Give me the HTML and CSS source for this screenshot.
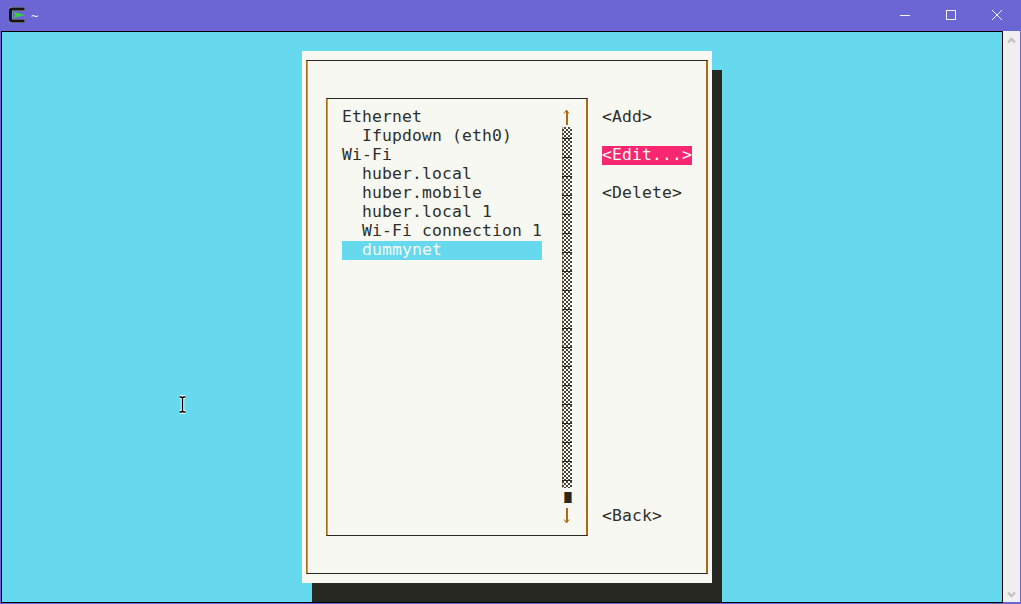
FILE: index.html
```html
<!DOCTYPE html>
<html lang="en">
<head>
<meta charset="utf-8">
<title>~</title>
<link rel="stylesheet" href="styles.css">
</head>
<body>
<div class="window">
  <header class="titlebar">
    <svg class="app-icon" width="17" height="17" viewBox="0 0 17 17">
      <path d="M15.500 2H3Q1.500 2 1.500 3.500V12.500Q1.500 14 3 14H15.500" fill="none" stroke="#a9a9b8" stroke-width="4"/>
      <path d="M15.500 2H3Q1.500 2 1.500 3.500V12.500Q1.500 14 3 14H15.500" fill="none" stroke="#151515" stroke-width="3"/>
      <path d="M4.500 5L15.500 8L4.500 11L6.500 8Z" fill="#2fd82f"/>
    </svg>
    <span class="title-text">~</span>
    <div class="controls">
      <svg class="ctl" width="12" height="12" viewBox="0 0 12 12"><path d="M1 6.500H11" stroke="#f4f4fb" fill="none"/></svg>
      <svg class="ctl" width="12" height="12" viewBox="0 0 12 12"><rect x="1.500" y="1.500" width="9" height="9" stroke="#f4f4fb" fill="none"/></svg>
      <svg class="ctl" width="12" height="12" viewBox="0 0 12 12"><path d="M1 1L11 11M11 1L1 11" stroke="#f4f4fb" fill="none"/></svg>
    </div>
  </header>
  <div class="body">
    <main class="terminal">
      <section class="dialog">
        <div class="frame">
          <div class="listbox">
            <ul class="entries">
              <li>Ethernet</li>
              <li class="sub">Ifupdown (eth0)</li>
              <li>Wi-Fi</li>
              <li class="sub">huber.local</li>
              <li class="sub">huber.mobile</li>
              <li class="sub">huber.local 1</li>
              <li class="sub">Wi-Fi connection 1</li>
              <li class="sub selected">dummynet</li>
            </ul>
            <div class="scroll">
              <svg class="arrow" width="10" height="19" viewBox="0 0 10 19">
                <path d="M2 5.500L4.500 2L7 5.500" fill="none" stroke="#ae6a12"/>
                <rect x="4" y="2" width="1" height="15" fill="#ae6a12"/>
                <rect x="5" y="3" width="1" height="14" fill="#3f82ba"/>
              </svg>
              <div class="track"></div>
              <div class="thumb-row"><div class="thumb"></div></div>
              <svg class="arrow" width="10" height="19" viewBox="0 0 10 19">
                <rect x="4" y="1" width="1" height="15" fill="#ae6a12"/>
                <rect x="5" y="1" width="1" height="14" fill="#3f82ba"/>
                <path d="M2 12.500L4.500 16L7 12.500" fill="none" stroke="#ae6a12"/>
              </svg>
            </div>
          </div>
          <div class="buttons">
            <div class="btn">&lt;Add&gt;</div>
            <div class="btn active">&lt;Edit...&gt;</div>
            <div class="btn">&lt;Delete&gt;</div>
            <div class="btn back">&lt;Back&gt;</div>
          </div>
        </div>
      </section>
      <svg class="cursor" width="13" height="21" viewBox="0 0 13 21">
        <path d="M3.500 3H5.500L6.500 4L7.500 3H9.500M6.500 4V17M3.500 18H5.500L6.500 17L7.500 18H9.500" fill="none" stroke="#fff" stroke-width="3.400"/>
        <path d="M3.500 3H5.500L6.500 4L7.500 3H9.500M6.500 4V17M3.500 18H5.500L6.500 17L7.500 18H9.500" fill="none" stroke="#000" stroke-width="1.400"/>
      </svg>
    </main>
    <aside class="scrollbar">
      <svg width="17" height="17" viewBox="0 0 17 17"><path d="M5 11.500L8.500 8L12 11.500" fill="none" stroke="#c2c2c2" stroke-width="2.400"/></svg>
      <svg width="17" height="17" viewBox="0 0 17 17"><path d="M5 7.500L8.500 11L12 7.500" fill="none" stroke="#c2c2c2" stroke-width="2.400"/></svg>
    </aside>
  </div>
</div>
</body>
</html>
```
FILE: styles.css
```css
* { box-sizing: border-box; }
html, body { margin: 0; height: 100%; overflow: hidden; }
body { background: #6c66d4; }

.window {
  width: 1021px;
  height: 604px;
  display: flex;
  flex-direction: column;
  background: #6c66d4;
  padding: 0 1px 1px 1px;
}

.titlebar {
  height: 31px;
  flex: none;
  display: flex;
  align-items: center;
  padding-left: 8px;
  color: #f4f4fb;
}
.app-icon { flex: none; }
.title-text {
  margin-left: 5px;
  font: 12px/31px "DejaVu Sans Mono", monospace;
  padding-top: 1px;
}
.controls {
  margin-left: auto;
  display: flex;
  gap: 34px;
  padding-right: 17px;
  margin-top: -1px;
}
.ctl { display: block; }

.body { flex: 1; display: flex; min-height: 0; }

.terminal {
  flex: none;
  width: 1002px;
  height: 572px;
  border: 1px solid #000;
  background: #66d9ef;
  position: relative;
  overflow: hidden;
  padding: 19px 0 0 300px;
  font: 16.4px/17px "DejaVu Sans Mono", monospace;
  color: #2e2f29;
}

.dialog {
  width: 410px;
  height: 532px;
  background: #f8f8f2;
  box-shadow: 10px 19px 0 #272822;
  padding: 9px 0 0 4px;
}

.frame {
  width: 402px;
  height: 514px;
  display: flex;
  border-top: 1px solid #272822;
  border-bottom: 1px solid #272822;
  border-left: 1px solid #ae6a12;
  border-right: 1px solid #3f82ba;
  box-shadow: inset 1px 0 0 #7fa8c8, inset -1px 0 0 #ae6a12;
  padding: 37px 0 0 19px;
}

.listbox {
  width: 262px;
  height: 438px;
  flex: none;
  display: flex;
  border-top: 1px solid #272822;
  border-bottom: 1px solid #272822;
  border-left: 1px solid #ae6a12;
  border-right: 1px solid #3f82ba;
  box-shadow: inset 1px 0 0 #7fa8c8, inset -1px 0 0 #ae6a12;
  padding: 9px 0 0 15px;
}

.entries {
  list-style: none;
  margin: 0;
  padding: 0;
  width: 200px;
  flex: none;
}
.entries li { height: 19px; white-space: pre; letter-spacing: 0.13px; }
.entries .sub { padding-left: 20px; }
.entries .selected { background: #66d9ef; color: #f8f8f2; }

.scroll { width: 10px; margin-left: 20px; flex: none; }
.arrow { display: block; }
.track {
  height: 361px;
  background:
    linear-gradient(to right, rgba(120, 50, 20, 0.45) 1px, transparent 1px),
    repeating-linear-gradient(to bottom, transparent 0 11px, #272822 11px 12px, transparent 12px 19px),
    conic-gradient(#45463f 25%, #f8f8f2 0 50%, #45463f 0 75%, #f8f8f2 0) 0 0 / 4px 4px;
}
.thumb-row { height: 19px; padding: 4px 0 0 2px; }
.thumb {
  width: 8px;
  height: 11px;
  background: #272822;
  border-left: 1px solid #ae6a12;
  border-right: 1px solid #3f82ba;
}

.buttons {
  flex: 1;
  height: 438px;
  display: flex;
  flex-direction: column;
  padding: 10px 0 10px 14px;
}
.btn { height: 19px; margin-bottom: 19px; white-space: pre; letter-spacing: 0.13px; width: max-content; }
.btn.active { background: #f92672; color: #f8f8f2; }
.btn.back { margin-top: auto; margin-bottom: 0; }

.cursor { position: absolute; left: 174px; top: 362px; }

.scrollbar {
  flex: none;
  width: 17px;
  height: 571px;
  background: #f0f0f0;
  display: flex;
  flex-direction: column;
  justify-content: space-between;
}
.scrollbar svg { display: block; }
```
